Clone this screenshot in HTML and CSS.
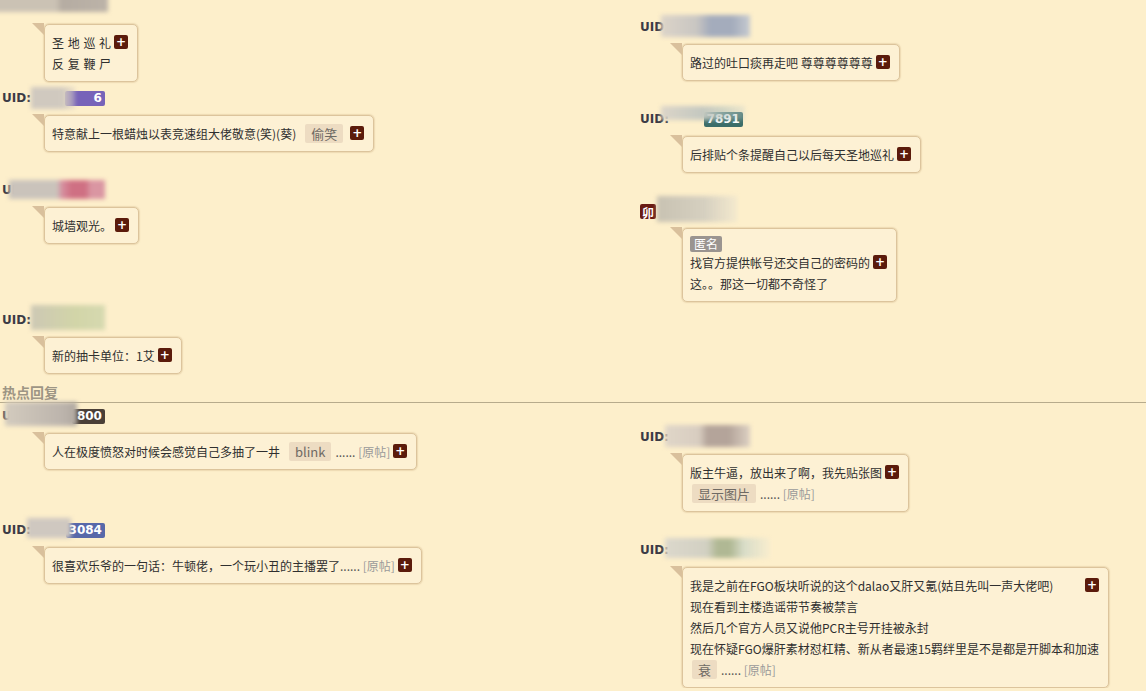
FILE: index.html
```html
<!DOCTYPE html>
<html lang="zh">
<head>
    <meta charset="UTF-8">
    <title>热点回复</title>
    <link rel="stylesheet" href="styles.css">
</head>
<body>
<div class="board">
    <!-- latest comments -->
    <div class="col">
        <div class="item">
            <div class="who"><span class="uid covered">UID:</span><span class="nick"></span><i class="smudge sm-a"></i></div>
            <div class="bubble spaced">
                <span class="plus">+</span>
                圣 地 巡 礼<br>反 复 鞭 尸
            </div>
        </div>
        <div class="item gap-8">
            <div class="who"><span class="uid">UID:</span><span class="nick"><span class="badge purple">6</span></span><i class="smudge sm-b"></i></div>
            <div class="bubble">
                <span class="plus">+</span>
                特意献上一根蜡烛以表竞速组大佬敬意(笑)(葵)<span class="tag">偷笑</span>
            </div>
        </div>
        <div class="item gap-30">
            <div class="who"><span class="uid">UID:</span><span class="nick"></span><i class="smudge sm-c"></i></div>
            <div class="bubble">
                <span class="plus">+</span>
                城墙观光。
            </div>
        </div>
        <div class="item gap-68">
            <div class="who"><span class="uid">UID:</span><span class="nick"></span><i class="smudge sm-d"></i></div>
            <div class="bubble">
                <span class="plus">+</span>
                新的抽卡单位：1艾
            </div>
        </div>
    </div>

    <div class="col right">
        <div class="item gap-20">
            <div class="who"><span class="uid">UID:</span><span class="nick"></span><i class="smudge sm-g"></i></div>
            <div class="bubble">
                <span class="plus">+</span>
                路过的吐口痰再走吧 尊尊尊尊尊尊
            </div>
        </div>
        <div class="item gap-30">
            <div class="who"><span class="uid">UID:</span><span class="nick"><span class="badge teal">7891</span></span><i class="smudge sm-h"></i></div>
            <div class="bubble">
                <span class="plus">+</span>
                后排贴个条提醒自己以后每天圣地巡礼
            </div>
        </div>
        <div class="item gap-30">
            <div class="who"><span class="badge red">卯</span><span class="nick"></span><i class="smudge sm-i"></i></div>
            <div class="bubble">
                <div class="anon">匿名</div>
                <span class="plus">+</span>
                找官方提供帐号还交自己的密码的<br>这。。那这一切都不奇怪了
            </div>
        </div>
    </div>

    <div class="heading">热点回复</div>

    <!-- hot replies -->
    <div class="col">
        <div class="item gap-5">
            <div class="who"><span class="uid">UID:</span><span class="nick"><span class="badge dark">800</span></span><i class="smudge sm-e"></i></div>
            <div class="bubble">
                <span class="plus">+</span>
                人在极度愤怒对时候会感觉自己多抽了一井<span class="tag">blink</span><span class="more">......</span> <span class="src">[原帖]</span>
            </div>
        </div>
        <div class="item gap-52">
            <div class="who"><span class="uid">UID:</span><span class="nick"><span class="badge blue">3084</span></span><i class="smudge sm-f"></i></div>
            <div class="bubble">
                <span class="plus">+</span>
                很喜欢乐爷的一句话：牛顿佬，一个玩小丑的主播罢了<span class="more">......</span> <span class="src">[原帖]</span>
            </div>
        </div>
    </div>

    <div class="col right">
        <div class="item gap-26">
            <div class="who"><span class="uid">UID:</span><span class="nick"></span><i class="smudge sm-j"></i></div>
            <div class="bubble">
                <span class="plus">+</span>
                版主牛逼，放出来了啊，我先贴张图<br><span class="tag first">显示图片</span><span class="more">......</span> <span class="src">[原帖]</span>
            </div>
        </div>
        <div class="item gap-30">
            <div class="who"><span class="uid">UID:</span><span class="nick"></span><i class="smudge sm-k"></i></div>
            <div class="bubble">
                <span class="plus">+</span>
                我是之前在FGO板块听说的这个dalao又肝又氪(姑且先叫一声大佬吧)<br>
                现在看到主楼造谣带节奏被禁言<br>
                然后几个官方人员又说他PCR主号开挂被永封<br>
                现在怀疑FGO爆肝素材怼杠精、新从者最速15羁绊里是不是都是开脚本和加速<br>
                <span class="tag first">衰</span><span class="more">......</span> <span class="src">[原帖]</span>
            </div>
        </div>
    </div>
</div>
</body>
</html>
```

FILE: styles.css
```css
* { box-sizing: border-box; }
body { margin: 0; background: #fdefcb; font-family: "Noto Sans CJK SC", sans-serif; font-size: 12px; color: #2f2f2f; overflow: hidden; }

.board { display: grid; grid-template-columns: 638px 1fr; margin-top: -1px; }
.col { display: flex; flex-direction: column; align-items: flex-start; }
.item { display: flex; flex-direction: column; align-items: flex-start; }
.gap-5 { margin-top: 5px; }
.gap-8 { margin-top: 8px; }
.gap-20 { margin-top: 20px; }
.gap-26 { margin-top: 26px; }
.gap-30 { margin-top: 30px; }
.gap-52 { margin-top: 52px; }
.gap-68 { margin-top: 68px; }

.heading { grid-column: 1 / -1; margin-top: 9px; padding-left: 2px; height: 20px; line-height: 19px; font-size: 14px; font-weight: bold; color: #9d9584; border-bottom: 1px solid #b7ab8c; }

/* user line */
.who { position: relative; display: flex; align-items: center; height: 16px; padding-left: 2px; font: bold 12px "DejaVu Sans", sans-serif; color: #3b3b46; }
.uid.covered { visibility: hidden; }
.nick { display: flex; justify-content: flex-end; width: 74px; }
.badge { display: inline-block; height: 15px; line-height: 15px; padding: 0 3px; color: #fff; font: bold 12px "DejaVu Sans", sans-serif; border-radius: 2px; }
.badge.purple { width: 40px; text-align: right; background: #7763b9; }
.badge.teal { background: #3b6d69; }
.badge.red { width: 16px; padding: 0; text-align: center; background: #6a1b12; font-family: "Noto Sans CJK SC", sans-serif; }
.badge.dark { background: #4a3f37; padding-left: 5px; }
.badge.blue { background: #5868a9; }

.smudge { position: absolute; filter: blur(2px); }
.sm-a { left: -8px; top: -9px; width: 116px; height: 22px; background: linear-gradient(90deg, #cbc2b4 0 55%, #b5aca2 60%, #bcb3a8 100%); }
.sm-b { left: 31px; top: -3px; width: 44px; height: 22px; background: linear-gradient(90deg, #d0c9bf 0 70%, rgba(215,205,195,0.4)); }
.sm-c { left: 9px; top: -2px; width: 96px; height: 19px; background: linear-gradient(90deg, #cac3bb 0 50%, #d690a0 55%, #cf7083 65% 80%, #da96a2 85%); }
.sm-d { left: 31px; top: -7px; width: 74px; height: 25px; background: linear-gradient(90deg, #cdc8b4, #d2d5a8 60%, #d6d9b0); }
.sm-e { left: 5px; top: -6px; width: 72px; height: 24px; background: linear-gradient(90deg, #d3cbbe, #bcb4ac 80%, #b0a8a0); }
.sm-f { left: 27px; top: -4px; width: 44px; height: 20px; background: #cfc8c0; }
.sm-g { left: 23px; top: -4px; width: 89px; height: 22px; background: linear-gradient(90deg, #dcd4c8, #c9c6c2 40%, #a4acbc 55% 80%, #c6cad0); }
.sm-h { left: 23px; top: -5px; width: 84px; height: 14px; background: linear-gradient(90deg, #dcd5c8, #c4c8c0 50%, rgba(180,195,190,0.6) 75%, rgba(200,210,205,0.3)); }
.sm-i { left: 19px; top: -7px; width: 80px; height: 26px; background: linear-gradient(90deg, #c8c2b2, #d6d0c0 60%, rgba(230,225,210,0.4)); }
.sm-j { left: 27px; top: -4px; width: 85px; height: 22px; background: linear-gradient(90deg, #e0d6c8, #d8cdc0 40%, #b4a49a 50% 75%, #dcd0c2); }
.sm-k { left: 27px; top: -4px; width: 105px; height: 20px; background: linear-gradient(90deg, #dcd8cc, #d2d0c2 40%, #b0b894 50% 62%, #d8dcc8 75%, rgba(240,235,215,0.3)); }

/* comment bubble */
.bubble { position: relative; margin: 9px 0 0 44px; padding: 7px 9px 7px 7px; line-height: 21px; background: #fdf1d4; border: 1px solid #dcc49c; border-radius: 5px; box-shadow: 0 0 1px 1px rgba(222,198,156,0.5); }
.bubble::before { content: ""; position: absolute; left: -13px; top: -2px; border-top: 12px solid #d9c09c; border-left: 12px solid transparent; }
.bubble.spaced { word-spacing: 1px; }
.plus { float: right; width: 14px; height: 14px; margin: 3px 0 0 3px; background: #5b1b0b; border-radius: 2px; color: #fff; font: bold 12px/14px "DejaVu Sans", sans-serif; text-align: center; }
.tag { display: inline-block; margin: 0 4px 0 9px; padding: 0 6px; line-height: 19px; font-size: 13px; color: #6f6a64; background: #eddcc2; border-radius: 2px; }
.tag.first { margin-left: 2px; }
.more { color: #555; }
.src { color: #9a9a9a; }
.anon { width: fit-content; height: 16px; line-height: 16px; padding: 0 4px; color: #fff; background: #9a9490; border-radius: 2px; }
```
